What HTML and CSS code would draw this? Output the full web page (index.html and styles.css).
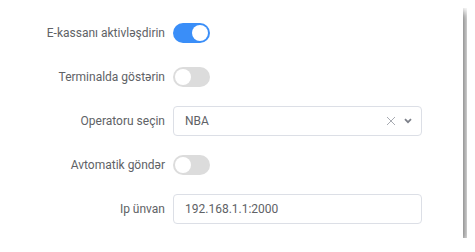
FILE: index.html
```html
<!DOCTYPE html>
<html lang="az">

<head>
    <meta charset="UTF-8">
    <meta name="viewport" content="width=device-width, initial-scale=1.0">
    <title>E-kassa</title>
    <link rel="stylesheet" href="styles.css">
</head>

<body>

    <!-- E-kassa settings -->
    <div class="card">
        <div class="form-row">
            <label class="form-label">E-kassanı aktivləşdirin</label>
            <div class="form-control">
                <span class="switch is-on"><span class="knob"></span></span>
            </div>
        </div>
        <div class="form-row">
            <label class="form-label">Terminalda göstərin</label>
            <div class="form-control">
                <span class="switch"><span class="knob"></span></span>
            </div>
        </div>
        <div class="form-row">
            <label class="form-label">Operatoru seçin</label>
            <div class="form-control">
                <div class="select">
                    <span class="select-value">NBA</span>
                    <svg class="icon-clear" width="10" height="10" viewBox="0 0 10 10">
                        <path d="M1 1 L9 9 M9 1 L1 9" stroke="#a8abb2" stroke-width="1" fill="none" />
                    </svg>
                    <svg class="icon-arrow" width="8" height="6" viewBox="0 0 8 6">
                        <path d="M1 1.2 L4 4.2 L7 1.2" stroke="#7d8089" stroke-width="1.8" fill="none" />
                    </svg>
                </div>
            </div>
        </div>
        <div class="form-row">
            <label class="form-label">Avtomatik göndər</label>
            <div class="form-control">
                <span class="switch"><span class="knob"></span></span>
            </div>
        </div>
        <div class="form-row">
            <label class="form-label">Ip ünvan</label>
            <div class="form-control">
                <input class="input" type="text" value="192.168.1.1:2000">
            </div>
        </div>
    </div>

</body>

</html>
```

FILE: styles.css
```css
:root {
    --text-color: #606266;
    --border-color: #dcdfe6;
    --switch-on: #3a8ef8;
    --switch-off: #dcdcdc;
}

body {
    margin: 8px;
    background: #ffffff;
    font-family: Roboto, "Noto Sans", Arial, sans-serif;
    font-size: 12px;
    color: var(--text-color);
}

.card {
    width: 455px;
    box-sizing: border-box;
    padding: 10px 0 14px 0;
    background: #fff;
    box-shadow: 3px 4px 8px rgba(0, 0, 0, 0.5), 0 0 4px rgba(0, 0, 0, 0.08);
}

.form-row {
    display: flex;
    align-items: center;
    height: 30px;
    margin-bottom: 14px;
}

.form-row:last-child {
    margin-bottom: 0;
}

.form-label {
    width: 165px;
    padding-right: 8px;
    box-sizing: border-box;
    text-align: right;
}

.form-control {
    width: 249px;
    display: flex;
    align-items: center;
}

.switch {
    position: relative;
    display: inline-block;
    width: 37px;
    height: 20px;
    border-radius: 10px;
    background: var(--switch-off);
}

.switch .knob {
    position: absolute;
    top: 2px;
    left: 2px;
    width: 16px;
    height: 16px;
    border-radius: 50%;
    background: #fff;
}

.switch.is-on {
    background: var(--switch-on);
}

.switch.is-on .knob {
    left: 19px;
}

.select,
.input {
    width: 100%;
    height: 30px;
    box-sizing: border-box;
    border: 1px solid var(--border-color);
    border-radius: 4px;
    padding: 0 11px;
    background: #fff;
}

.select {
    display: flex;
    align-items: center;
    padding-right: 9px;
}

.select-value {
    flex: 1;
}

.icon-clear {
    margin-right: 8px;
}

.input {
    font-family: inherit;
    font-size: 12px;
    color: var(--text-color);
    outline: none;
}
```
